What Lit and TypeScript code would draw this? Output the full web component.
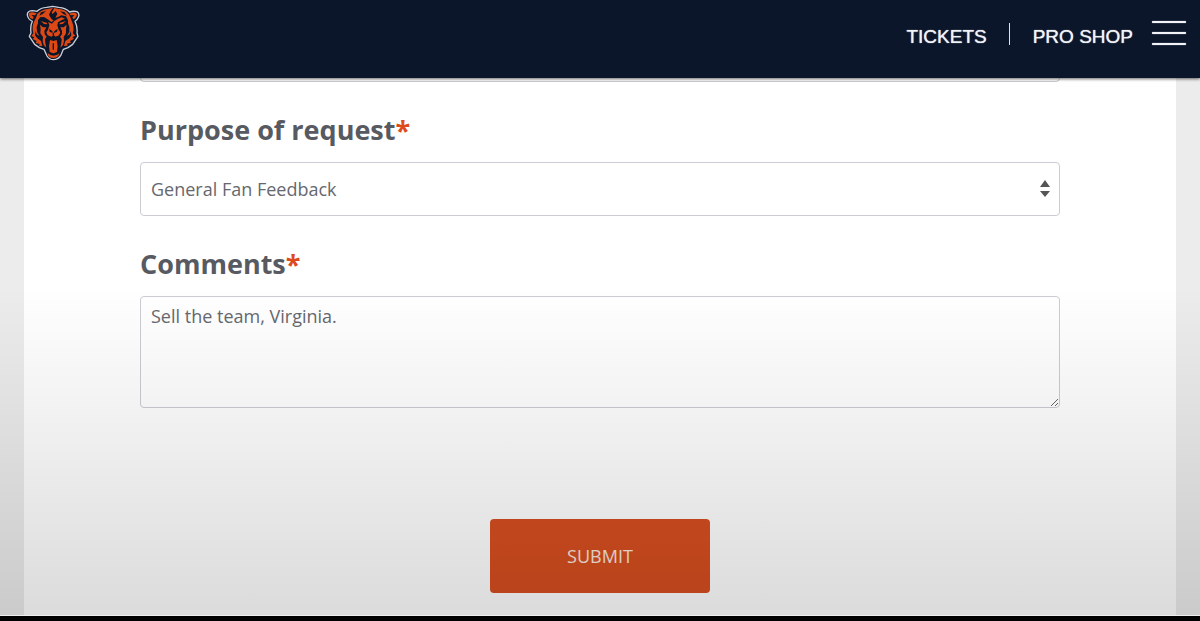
import { html, css, svg, LitElement } from "lit";
import { customElement, property, state } from "lit/decorators.js";

const bear = svg`
  <path fill="#0b162a" stroke="#c9ced8" stroke-width="4" stroke-linejoin="round"
    d="M22 46 Q21 34 36 33 Q44 33 51 35 Q62 24 80 23 L98 20 L116 23 Q138 25 149 37 Q160 33 171 36 Q180 42 175 53 Q172 61 165 65 Q173 82 171 100 L174 110 L166 122 L158 134 L144 144 L130 149 L122 168 Q114 180 100 180 Q88 180 81 169 L72 149 L58 144 L44 134 L36 122 L28 110 L33 99 Q30 80 37 65 Q24 59 22 46 Z"/>
  <g fill="#dd4814">
    <path d="M26 45 Q27 37 38 38 L50 41 L45 47 L34 46 L41 52 L38 59 Q28 55 26 45 Z"/>
    <path d="M171 44 Q167 38 158 39 L148 42 L152 47 L163 46 L157 53 L160 59 Q170 55 171 44 Z"/>
    <path d="M52 43 Q65 29 83 28 L99 25 L92 34 L87 45 L94 57 L101 63 L94 67 L83 59 L72 52 L60 53 L54 62 L54 71 L50 82 L51 96 L58 109 L50 104 L47 94 L45 107 L52 116 L63 124 L67 139 L57 139 L59 133 L47 130 L50 124 L38 118 L43 113 L34 109 L40 101 Q35 80 42 66 L49 52 Z"/>
    <path d="M103 25 L117 28 Q137 30 146 43 L151 53 L156 66 Q164 82 159 101 L166 108 L157 113 L162 117 L150 124 L153 129 L141 132 L143 138 L132 139 L136 124 L148 116 L154 107 L152 94 L149 104 L141 109 L148 96 L148 82 L144 71 L144 62 L138 50 L124 47 L113 53 L106 54 L112 43 L107 34 L98 43 L95 39 Z"/>
    <path d="M103 64 L114 57 L125 53 L135 57 L124 62 L114 68 L112 77 L116 90 L121 98 L117 107 L107 111 L101 106 L94 111 L83 107 L79 98 L84 90 L88 76 L84 67 L96 72 Z"/>
    <path d="M60 75 L69 83 L79 83 L73 94 L74 104 L80 111 L75 119 L76 130 L79 144 L71 136 L68 123 L69 112 L61 101 L62 88 Z"/>
    <path d="M140 75 L131 83 L121 83 L126 94 L126 104 L120 111 L125 119 L124 130 L121 144 L129 136 L132 123 L131 112 L138 101 L138 88 Z"/>
    <path d="M62 63 L71 67 L80 69 L82 74 L72 73 Z"/>
    <path d="M138 64 L129 67 L120 69 L118 74 L128 73 Z"/>
    <path d="M90 121 L100 124 L110 121 L113 140 L111 157 L100 161 L89 157 L87 140 Z"/>
    <path d="M83 160 L91 166 L101 168 L112 165 L118 160 L115 169 Q110 175 100 175 Q89 175 85 169 Z"/>
  </g>
  <g fill="#0b162a">
    <path d="M63 38 L78 34 L68 43 L58 48 Z"/>
    <path d="M120 34 L134 38 L141 48 L130 43 Z"/>
    <path d="M87 88 L94 92 L98 96 L98 107 L102 107 L102 96 L106 92 L113 88 L111 96 L104 99 L96 99 L89 96 Z"/>
    <path d="M98 131 L102 131 L102 150 L98 150 Z"/>
  </g>`;

@customElement("site-header")
export class SiteHeader extends LitElement {
  override render() {
    return html`
      <header>
        <a class="home" href="#" aria-label="Home">
          <svg viewBox="18 16 162 168" aria-hidden="true">${bear}</svg>
        </a>
        <nav>
          <a href="#tickets">TICKETS</a>
          <span class="divider"></span>
          <a href="#shop">PRO SHOP</a>
          <button class="menu" type="button" aria-label="Menu">
            <span></span><span></span><span></span>
          </button>
        </nav>
      </header>
    `;
  }

  static styles = css`
    :host {
      display: block;
      position: relative;
      z-index: 2;
    }
    header {
      display: flex;
      justify-content: space-between;
      align-items: flex-start;
      box-sizing: border-box;
      height: 78px;
      padding: 5px 14px 0 26px;
      background: #0b162a;
      box-shadow: 0 1px 3px rgba(0, 0, 0, 0.6);
    }
    .home svg {
      display: block;
      width: 54px;
      height: 56px;
    }
    nav {
      display: flex;
      align-items: center;
      padding-top: 14px;
      font: 19px/36px "Liberation Sans", Arial, sans-serif;
      text-shadow: 0 0 1px #f1f3f7;
    }
    a {
      color: #f1f3f7;
      text-decoration: none;
    }
    .divider {
      width: 1px;
      height: 22px;
      margin: 0 23px 6px 22px;
      background: #dfe2e8;
    }
    .menu {
      display: flex;
      flex-direction: column;
      gap: 9px;
      width: 34px;
      margin: 0 0 8px 19px;
      padding: 0;
      border: 0;
      background: none;
    }
    .menu span {
      width: 100%;
      height: 2px;
      border-radius: 1px;
      background: #f1f3f7;
      box-shadow: 0 0 1px #f1f3f7;
    }
  `;
}

@customElement("form-label")
export class FormLabel extends LitElement {
  @property() text = "";

  override render() {
    return html`${this.text}<span class="required">*</span>`;
  }

  static styles = css`
    .required {
      color: #dd4a1c;
    }
  `;
}

@customElement("app-root")
export class AppRoot extends LitElement {
  @state() private comments = "Sell the team, Virginia.";

  private onInput(e: Event) {
    this.comments = (e.target as HTMLTextAreaElement).value;
  }

  override render() {
    return html`
      <site-header></site-header>
      <main>
        <form @submit=${(e: Event) => e.preventDefault()}>
          <!-- scrolled mostly under the header -->
          <input class="control" type="text" aria-label="Phone">

          <label for="purpose"><form-label text="Purpose of request"></form-label></label>
          <div class="select">
            <select class="control" id="purpose">
              <option>General Fan Feedback</option>
            </select>
            <svg class="arrows" viewBox="0 0 10 18" aria-hidden="true">
              <path d="M5 0 L10 7 H0 Z M0 11 H10 L5 17 Z" />
            </svg>
          </div>

          <label for="comments"><form-label text="Comments"></form-label></label>
          <textarea class="control" id="comments" .value=${this.comments} @input=${this.onInput}></textarea>

          <button class="submit" type="submit">SUBMIT</button>
        </form>
      </main>
    `;
  }

  static styles = css`
    :host {
      display: flex;
      flex-direction: column;
      box-sizing: border-box;
      min-height: 100vh;
      border-bottom: 5px solid #000;
      background: #ececec;
      font-family: "Open Sans", "Noto Sans", sans-serif;
    }
    main {
      position: relative;
      flex: 1;
      margin-top: -50px;
      padding: 0 24px;
    }
    /* fade towards the bottom of the page */
    main::after {
      content: "";
      position: absolute;
      inset: 0;
      background: linear-gradient(transparent 44%, rgba(0, 0, 0, 0.05) 65%, rgba(0, 0, 0, 0.14));
      border-bottom: 1px solid #eee;
      pointer-events: none;
    }
    form {
      display: flex;
      flex-direction: column;
      box-sizing: border-box;
      height: 100%;
      padding: 0 116px 23px;
      background: #fff;
    }
    label {
      margin: 28px 0 12px;
      color: #585a62;
      font-size: 27px;
      font-weight: 700;
      line-height: 40px;
    }
    .control {
      display: block;
      box-sizing: border-box;
      width: 100%;
      height: 54px;
      margin: 0;
      padding: 0 10px;
      border: 1px solid #cbccd4;
      border-radius: 4px;
      background: transparent;
      color: #66686e;
      font: 18px/24px "Open Sans", "Noto Sans", sans-serif;
    }
    .select {
      position: relative;
    }
    select.control {
      appearance: none;
    }
    .arrows {
      position: absolute;
      right: 10px;
      top: 18px;
      width: 10px;
      height: 18px;
      fill: #555;
      pointer-events: none;
    }
    textarea.control {
      height: 112px;
      padding: 7px 10px;
      resize: vertical;
    }
    .submit {
      align-self: center;
      margin-top: 111px;
      padding: 25px 77px;
      border: 0;
      border-radius: 4px;
      background: #d64e20;
      color: #fbe6dd;
      font: 500 18px/24px "Open Sans", "Noto Sans", sans-serif;
    }
  `;
}
